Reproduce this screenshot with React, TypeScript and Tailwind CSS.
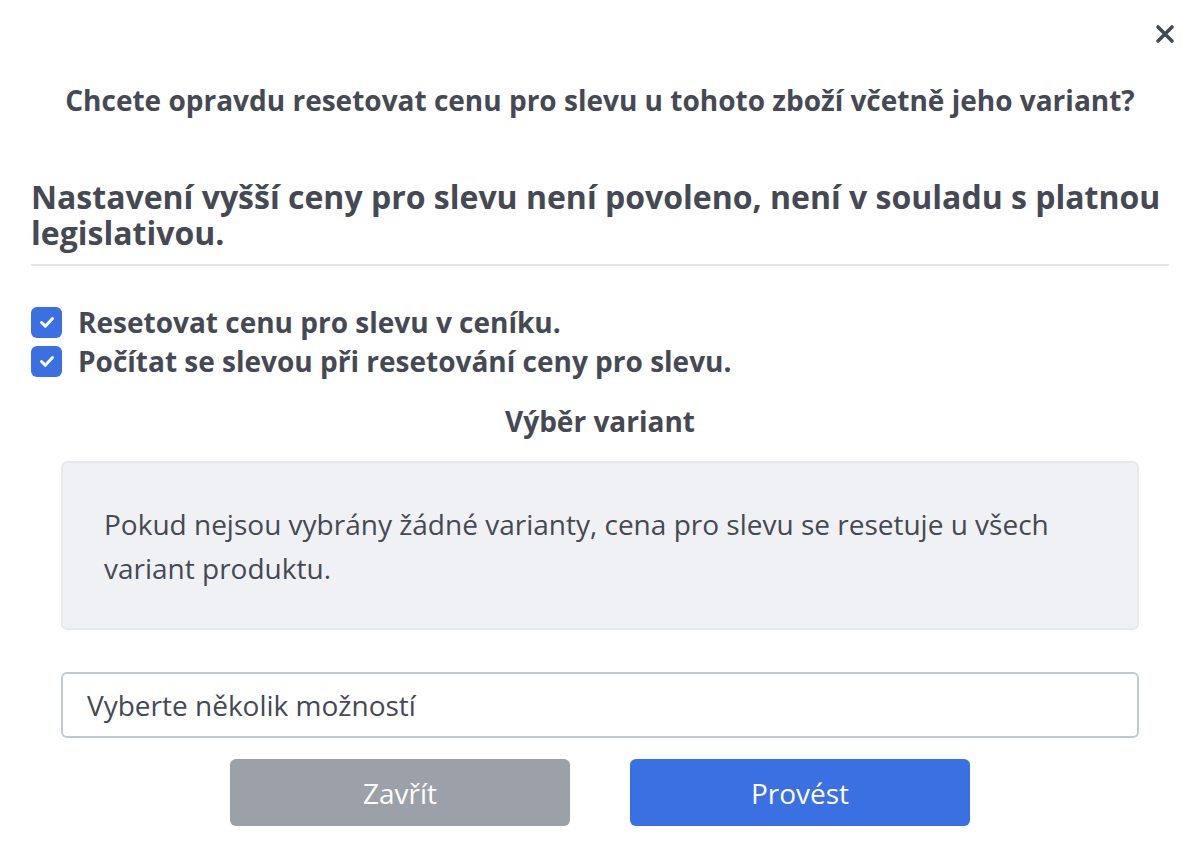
import React from "react";

function CheckRow({ label }: { label: string }) {
  return (
    <label className="flex items-center gap-[16px]">
      <span className="flex h-[31px] w-[31px] shrink-0 items-center justify-center rounded-[6px] bg-[#3a70e2]">
        <svg viewBox="0 0 24 24" className="h-[24px] w-[24px]" fill="none" stroke="white" strokeWidth={3} strokeLinecap="round" strokeLinejoin="round">
          <path d="M6.5 12.5l3.8 3.8L17.5 8.5" />
        </svg>
      </span>
      <span className="text-[28px] font-bold leading-[32px]">{label}</span>
    </label>
  );
}

export default function App() {
  return (
    <div className="min-h-[866px] bg-white px-[31px] pt-[20px] font-['Open_Sans',sans-serif] text-[#454953]">
      <div className="flex justify-end">
        <button className="-mr-[10px] flex h-[28px] w-[28px] items-center justify-center">
          <svg viewBox="0 0 24 24" className="h-[24px] w-[24px]" fill="none" stroke="#454953" strokeWidth={3.6} strokeLinecap="round">
            <path d="M5 5l14 14M19 5L5 19" />
          </svg>
        </button>
      </div>

      <h3 className="mt-[34px] text-center text-[28px] font-bold leading-[36px]">
        Chcete opravdu resetovat cenu pro slevu u tohoto zboží včetně jeho variant?
      </h3>

      <h2 className="mt-[61px] text-[32px] font-bold leading-[36px]">
        Nastavení vyšší ceny pro slevu není povoleno, není v souladu s platnou legislativou.
      </h2>
      <hr className="mt-[13px] border-t-2 border-[#e3e5e8]" />

      <div className="mt-[40px] flex flex-col gap-[7px]">
        <CheckRow label="Resetovat cenu pro slevu v ceníku." />
        <CheckRow label="Počítat se slevou při resetování ceny pro slevu." />
      </div>

      <div className="mt-[26px] text-center text-[28px] font-bold leading-[36px]">Výběr variant</div>

      <div className="mx-[30px] mt-[22px]">
        <div className="h-[169px] rounded-[6px] border-2 border-[#e6e8ec] bg-[#f0f1f5] px-[41px] pt-[39px] text-[28px] leading-[44px]">
          Pokud nejsou vybrány žádné varianty, cena pro slevu se resetuje u všech variant produktu.
        </div>

        <div className="mt-[42px] flex h-[66px] items-center rounded-[6px] border-2 border-[#c3c7ce] bg-white px-[24px] text-[28px]">
          Vyberte několik možností
        </div>
      </div>

      <div className="mt-[21px] flex justify-center gap-[60px]">
        <button className="h-[67px] w-[340px] rounded-[6px] bg-[#9ca0a8] text-[28px] text-white">Zavřít</button>
        <button className="h-[67px] w-[340px] rounded-[6px] bg-[#3a70e2] text-[28px] text-white">Provést</button>
      </div>
    </div>
  );
}
